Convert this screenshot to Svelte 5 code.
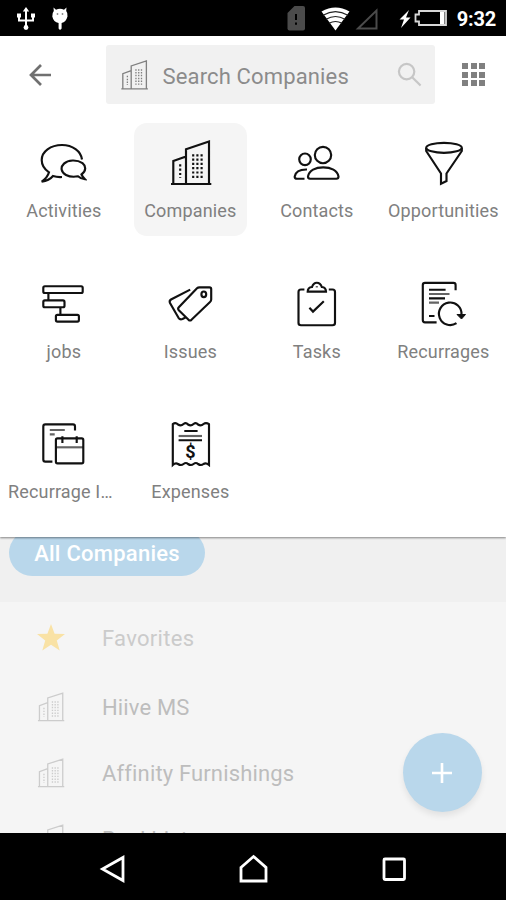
<script lang="ts">
	interface MenuItem {
		label: string;
		icon: string;
	}

	const ITEMS: MenuItem[] = [
		{ label: 'Activities', icon: 'activities' },
		{ label: 'Companies', icon: 'companies' },
		{ label: 'Contacts', icon: 'contacts' },
		{ label: 'Opportunities', icon: 'opportunities' },
		{ label: 'jobs', icon: 'jobs' },
		{ label: 'Issues', icon: 'issues' },
		{ label: 'Tasks', icon: 'tasks' },
		{ label: 'Recurrages', icon: 'recurrages' },
		{ label: 'Recurrage I…', icon: 'invoices' },
		{ label: 'Expenses', icon: 'expenses' }
	];

	const COMPANIES = ['Hiive MS', 'Affinity Furnishings', 'Bankhist'];

	let selected = $state('companies');
</script>

{#snippet building()}
	<path d="M5 45H45.3M7.3 44V22L20 17.4M20 44V10.2L43 2.6V44" />
	<path class="windows" d="M14.2 25.3V39M27.2 15.2V39M31.4 15.2V39M35.6 15.2V39" />
{/snippet}

<div class="screen">
	<header class="status-bar">
		<svg class="status-left" viewBox="0 0 60 36">
			<path d="M10 10V28M3 16V20.5H17V16" />
			<path class="solid" d="M10 7l3.2 4.5H6.8zM1 13.5h4v4H1zM15 13.5h4v4h-4z" />
			<circle class="solid" cx="10" cy="27.5" r="2.4" />
			<path class="solid" d="M37.5 7.5l2.5 2.2Q44 8 48 9.7L50.5 7.5 50.2 11Q52 13 51.5 16.5Q50 22 45.6 23V28.5Q44 31 42.6 28.5V23Q37.5 22 36.3 16.5Q36 13 37.8 11z" />
			<circle class="eye" cx="41.5" cy="14" r="0.9" />
			<circle class="eye" cx="46.5" cy="14" r="0.9" />
		</svg>
		<div class="status-right">
			<svg class="status-icons" viewBox="0 0 166 36">
				<path class="sim" d="M9.5 6H18Q20 6 20 8V28.5Q20 30.5 18 30.5H4.5Q2.500 30.5 2.5 28.5V13z" />
				<path class="sim-mark" d="M11 14V20M11 22.5V24.8" />
				<path class="solid" d="M36.5 11.5Q50.5 3.5 64.5 11.5L50.5 30.5z" />
				<path class="wifi-gap" d="M38 15.2Q50.5 8 63 15.2M41 19.3Q50.5 13.8 60 19.3M44 23.3Q50.5 19.6 57 23.3" />
				<path class="signal" d="M73 28.5H91.5V10.5z" />
				<path class="solid" d="M124 10l-9.500 9.5h4.5L116 28l9.5-10.5h-4.5z" />
				<path class="battery" d="M134 11H161V25H134V21.5H130.5V14.5H134z" />
				<path class="solid" d="M155 12h4.5v12h-4.5z" />
			</svg>
			<span class="clock">9:32</span>
		</div>
	</header>

	<section class="menu">
		<div class="search-row">
			<button class="back" aria-label="Back">
				<svg viewBox="0 0 26 26"><path d="M24 13H3.5M14 3L4 13L14 23" /></svg>
			</button>
			<div class="search">
				<svg class="search-building" viewBox="0 0 50 48">{@render building()}</svg>
				<span class="placeholder">Search Companies</span>
				<svg class="magnifier" viewBox="0 0 26 26">
					<circle cx="10" cy="10" r="8" />
					<path d="M15.8 15.8L24.5 24.5" />
				</svg>
			</div>
			<button class="apps" aria-label="Apps">
				{#each Array(9) as _}
					<i></i>
				{/each}
			</button>
		</div>

		<nav class="grid">
			{#each ITEMS as item (item.icon)}
				<button class="item" class:active={selected === item.icon} onclick={() => (selected = item.icon)}>
					<svg viewBox="0 0 48 48">
						{#if item.icon === 'activities'}
							<path d="M43 20.5C42 12 33.5 6 23 6C11.5 6 2.7 12.5 2.7 21C2.7 26 5.5 30.3 10 33.3C9 37 6.5 40 2.7 42.6C7.5 42 11.5 40 14 37Q18 38.3 23 38" />
							<path d="M42.5 35.5C47.5 32 47 27 43.5 24.2C38 20.4 29 20.8 25 24.6C21 28.5 22.2 33.5 27 36C31 38 35.5 38 39 37.3Q42 40 46 40.3Q43.5 38 42.5 35.5z" />
						{:else if item.icon === 'companies'}
							{@render building()}
						{:else if item.icon === 'contacts'}
							<circle cx="31" cy="16" r="8.2" />
							<circle cx="13" cy="20.3" r="5.8" />
							<path d="M18 39.7H44.5Q46.5 39.7 46.5 37.5C45.5 31.5 39 28.3 31.2 28.3S17 31.5 16 37.5Q16 39.7 18 39.7z" />
							<path d="M15 30.5C8 30.3 3.5 33 2.7 37.5Q2.5 39.7 5 39.7H12.5" />
						{:else if item.icon === 'opportunities'}
							<ellipse cx="25" cy="8.8" rx="17.8" ry="5" />
							<path d="M7.2 9V12L22 34.5V44.8L27.5 42V34.5L42.8 12V9" />
						{:else if item.icon === 'jobs'}
							<rect x="4.3" y="6.2" width="39.4" height="6.8" rx="1.5" />
							<rect x="4.3" y="20.4" width="21.2" height="6.8" rx="1.5" />
							<rect x="16.9" y="34.8" width="23" height="6.8" rx="1.5" />
							<path d="M9.4 13V20.4M21.4 27.2V34.8" />
						{:else if item.icon === 'issues'}
							<path d="M33.5 7.3H43.5Q45.2 7.3 45.2 9V19.5Q45.2 21 44 22L25.5 39.8Q24 41 22.5 39.8L12.8 30.2Q11.5 28.7 12.8 27.3L31 8.3Q32 7.3 33.5 7.3z" />
							<ellipse cx="37.8" cy="14.3" rx="2.4" ry="2.8" />
							<path d="M24.2 9.6L5 19.5Q3 20.8 4 23L12.5 37.8Q14 40 16.5 39L19.5 37.5" />
						{:else if item.icon === 'tasks'}
							<path d="M12.4 9.5H9Q6.5 9.5 6.5 12V43Q6.5 45.2 9 45.2H40.5Q43 45.2 43 43V12Q43 9.5 40.5 9.5H36.8" />
							<path d="M15.7 11.6Q15.7 7.5 20 7C21 4 22.5 2.7 24.8 2.7S28.8 4 29.8 7Q34 7.5 34 11.6z" />
							<path class="thin" d="M24.8 6V7.5" />
							<path d="M17.4 27.7L21 31.6L31.8 21.3" />
						{:else if item.icon === 'recurrages'}
							<path d="M36.6 10.3V5Q36.6 2.9 34.5 2.9H6Q3.8 2.9 3.8 5V40Q3.8 42.3 6 42.3H17.6" />
							<path d="M10 9.7H26.6M10 18.3H26M10 36H15.5" />
							<path class="thin" d="M10 14H30.5M10 22.6H20" />
							<path d="M42.5 34.6A11.3 11.3 0 1 0 37.5 43.2" />
							<path class="arrow" d="M38 34.5H46.5L42.5 39z" />
						{:else if item.icon === 'invoices'}
							<path d="M36 10.6V6.5Q36 4.4 34 4.4H6.3Q4.3 4.4 4.3 6.5V39.5Q4.3 41.6 6.3 41.6H13.4" />
							<path class="thin" d="M10.8 10H25.8M10.8 14.3H15.7" />
							<rect x="16.9" y="18.4" width="27.4" height="24.9" rx="1.5" />
							<path d="M23.4 16.3V23M37.7 16.3V23" />
							<path class="thin" d="M17 27.3H44" />
						{:else}
							<path d="M6.8 45V4.2Q9.5 2 12 4.5Q15 6.5 17.5 4Q20 2 22 4.5Q25 6.5 27.5 4Q30 2 32 4.5Q35 6.5 37.5 4Q40 2 43 4.2V45Q40 42.5 37.5 44Q35 46 32 44Q30 42 27.5 44Q25 46 22 44Q20 42 17.5 44Q15 46 12 44Q9.5 42.5 6.8 45z" />
							<path d="M18.3 11H31.6M12.6 20.2H36" />
							<path class="thin" d="M12.6 16H36" />
							<text x="24.5" y="37.5">$</text>
						{/if}
					</svg>
					<span class="label" class:truncated={item.label.endsWith('…')}>{item.label}</span>
				</button>
			{/each}
		</nav>
	</section>

	<main class="content">
		<div class="filter-strip">
			<span class="pill">All Companies</span>
		</div>
		<ul class="list">
			<li class="favorites">
				<svg class="star" viewBox="0 0 30 30">
					<path d="M15 1l3.6 9.7 10.4.4-8.2 6.4 2.9 10-8.7-5.8-8.7 5.8 2.9-10L1 11.1l10.4-.4z" />
				</svg>
				<span>Favorites</span>
			</li>
			{#each COMPANIES as company}
				<li>
					<svg class="row-building" viewBox="2 0 46 48">{@render building()}</svg>
					<span>{company}</span>
				</li>
			{/each}
		</ul>
		<button class="fab" aria-label="Add company">
			<svg viewBox="0 0 24 24"><path d="M12 2V22M2 12H22" /></svg>
		</button>
	</main>

	<footer class="nav-bar">
		<svg viewBox="0 0 30 30"><path d="M25 3.5V26.5L4.5 15z" /></svg>
		<svg viewBox="0 0 30 30"><path d="M3 13.5L15.5 2.5L28 13.5V27H3z" /></svg>
		<svg viewBox="0 0 30 30"><rect x="5" y="5" width="20.5" height="20.5" rx="1" /></svg>
	</footer>
</div>

<style>
	:global(body) {
		margin: 0;
		background: #fff;
	}

	.screen {
		display: flex;
		flex-direction: column;
		width: 506px;
		height: 900px;
		overflow: hidden;
		font-family: Roboto, sans-serif;
	}

	svg {
		display: block;
		flex: none;
		fill: none;
		stroke: currentcolor;
		stroke-width: 2;
	}

	button {
		padding: 0;
		border: 0;
		background: none;
		color: inherit;
		font: inherit;
	}

	.status-bar {
		display: flex;
		flex: none;
		justify-content: space-between;
		height: 36px;
		background: #000;
		color: #fff;
	}

	.status-left {
		width: 60px;
		height: 36px;
		margin-left: 16px;
	}

	.status-right {
		display: flex;
		align-items: center;
		padding-right: 10px;
	}

	.status-icons {
		width: 166px;
		height: 36px;
		margin-right: 6px;
	}

	.solid {
		fill: #fff;
		stroke: none;
	}

	.eye {
		fill: #888;
		stroke: none;
	}

	.sim {
		fill: #4b4b4b;
		stroke: none;
	}

	.sim-mark {
		stroke: #000;
	}

	.wifi-gap {
		stroke: #222;
		stroke-width: 1.1;
	}

	.signal {
		stroke: #4b4b4b;
	}

	.battery {
		stroke: #d8d8d8;
		stroke-width: 1.8;
	}

	.clock {
		padding-top: 2px;
		font-size: 20px;
		font-weight: 700;
		line-height: 34px;
		letter-spacing: -0.2px;
	}

	.menu {
		z-index: 1;
		box-sizing: border-box;
		flex: none;
		height: 501px;
		background: #fff;
		box-shadow: 0 1px 2px rgb(0 0 0 / 45%);
	}

	.search-row {
		display: flex;
		align-items: center;
		height: 59px;
		padding: 9px 21px 0 27px;
		color: #707070;
	}

	.back {
		width: 26px;
		margin-right: 53px;
	}

	.back svg {
		width: 26px;
		height: 26px;
		stroke-width: 2.7;
	}

	.search {
		display: flex;
		align-items: center;
		box-sizing: border-box;
		width: 329px;
		height: 59px;
		padding: 0 13px 0 12px;
		border-radius: 3px;
		background: #f1f1f1;
	}

	.search-building {
		width: 33px;
		height: 32px;
		color: #808080;
	}

	.placeholder {
		flex: 1;
		margin-left: 11.5px;
		padding-top: 3px;
		color: #8b8b8b;
		font-size: 22px;
		letter-spacing: 0.15px;
	}

	.magnifier {
		width: 25px;
		height: 25px;
		color: #c6c6c6;
		stroke-width: 2.3;
	}

	.apps {
		display: grid;
		grid-template-columns: repeat(3, 6px);
		gap: 2.5px;
		margin-left: 27px;
	}

	.apps i {
		width: 6px;
		height: 6px;
		background: #808080;
	}

	.grid {
		display: grid;
		grid-template-columns: repeat(4, 126.5px);
		grid-auto-rows: 140.7px;
		justify-items: center;
		padding-top: 19px;
		padding-left: 0.6px;
	}

	.item {
		display: flex;
		flex-direction: column;
		align-items: center;
		width: 113px;
		height: 113px;
		padding-top: 16px;
		border-radius: 13px;
		color: #111;
	}

	.item.active {
		background: #f5f5f5;
	}

	.item svg {
		width: 48px;
		height: 48px;
		margin-right: 0.8px;
		stroke-width: 2.15;
	}

	.item text {
		fill: #111;
		stroke: none;
		font-size: 18px;
		font-weight: 700;
		text-anchor: middle;
	}

	.windows {
		stroke-dasharray: 2.2 2.1;
	}

	.thin {
		opacity: 0.65;
	}

	.arrow {
		fill: currentcolor;
		stroke-width: 1;
	}

	.label {
		margin-top: 12px;
		color: #808080;
		font-size: 18px;
		line-height: 24px;
		letter-spacing: 0.15px;
		white-space: nowrap;
	}

	.label.truncated {
		margin-right: 7px;
	}

	.content {
		position: relative;
		display: flex;
		flex: 1;
		flex-direction: column;
		min-height: 0;
		overflow: hidden;
		background: #f5f5f5;
	}

	.filter-strip {
		display: flex;
		flex: 0 0 65px;
		align-items: flex-start;
		padding-left: 9px;
		background: #f0f0f0;
	}

	.pill {
		width: 196px;
		height: 46px;
		margin-top: -7px;
		border-radius: 23px;
		background: #b9d7eb;
		color: #fff;
		font-size: 22px;
		font-weight: 500;
		line-height: 47px;
		letter-spacing: 0.25px;
		text-align: center;
	}

	.list {
		flex: 0 0 auto;
		margin: 0;
		padding: 0;
		color: #bdbdbd;
		font-size: 22px;
		letter-spacing: 0.15px;
		list-style: none;
	}

	.list li {
		display: flex;
		align-items: center;
		height: 66px;
		padding-left: 36px;
	}

	.list .favorites {
		height: 72px;
		color: #cbcbcb;
		letter-spacing: 0.3px;
	}

	.star {
		width: 30px;
		height: 30px;
		margin-right: 36px;
	}

	.star path {
		fill: #f9e2a5;
		stroke: none;
	}

	.row-building {
		width: 30px;
		height: 32px;
		margin-right: 36px;
		color: #ccc;
	}

	.fab {
		position: absolute;
		right: 24.5px;
		bottom: 21px;
		display: grid;
		place-items: center;
		width: 79px;
		height: 79px;
		border-radius: 50%;
		background: #b9d7eb;
		box-shadow: 0 4px 6px rgb(0 0 0 / 8%);
		color: #fff;
	}

	.fab svg {
		width: 24px;
		height: 24px;
		stroke-width: 2.6;
	}

	.nav-bar {
		display: flex;
		flex: 0 0 auto;
		align-items: center;
		justify-content: center;
		gap: 110.5px;
		box-sizing: border-box;
		height: 67px;
		padding-top: 5px;
		background: #000;
		color: #fff;
	}

	.nav-bar svg {
		width: 30px;
		height: 30px;
		stroke-width: 2.8;
	}
</style>
